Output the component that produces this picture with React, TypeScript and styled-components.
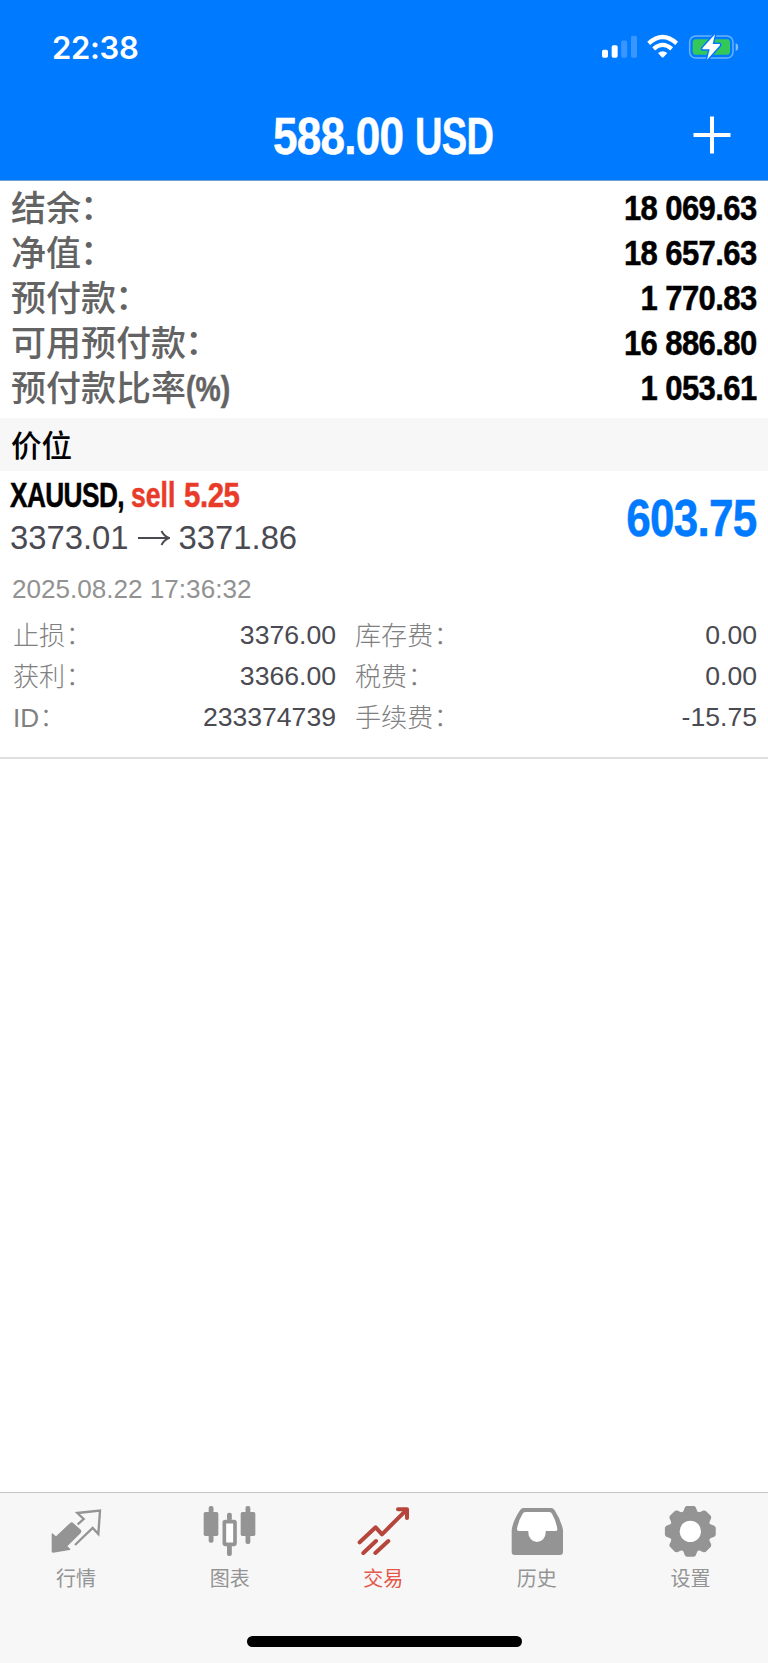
import React from "react";
import styled, { createGlobalStyle } from "styled-components";

const GlobalStyle = createGlobalStyle`
  * { box-sizing: border-box; }
  body {
    margin: 0;
    background: #fff;
    font-family: "Liberation Sans", "Noto Sans CJK SC", sans-serif;
  }
`;

const Screen = styled.div`
  width: 768px;
  height: 1663px;
  display: flex;
  flex-direction: column;
  background: #fff;
  overflow: hidden;
`;

const Header = styled.header`
  height: 181px;
  background: #007aff;
  border-bottom: 1px solid #709fd2;
  color: #fff;
`;

const StatusBar = styled.div`
  height: 90px;
  padding: 4px 28px 0 52px;
  display: flex;
  align-items: center;
  justify-content: space-between;
`;

const Clock = styled.span`
  padding-top: 1px;
  font: 600 31px/40px Inter, sans-serif;
  letter-spacing: -0.3px;
`;

const NavBar = styled.div`
  height: 90px;
  display: grid;
  grid-template-columns: 80px 1fr 80px;
  align-items: center;
  justify-items: center;
`;

const Title = styled.h1`
  margin: 0;
  padding: 4px 2px 0 0;
  display: flex;
  gap: 12px;
  font-size: 51px;
`;

const AddButton = styled.button`
  margin-right: 32px;
  padding: 0;
  border: 0;
  background: none;
  display: flex;
`;

/* Condensed bold run: a box of the final width holding a horizontally squeezed line */
const CondensedBox = styled.span<{ $w: number; $end?: boolean }>`
  width: ${(p) => p.$w}px;
  display: flex;
  justify-content: ${(p) => (p.$end ? "flex-end" : "flex-start")};
  white-space: pre;
  font-weight: 700;
  line-height: 1.2;
`;

const Squeezed = styled.span<{ $scale: number; $end?: boolean; $track: number }>`
  flex: none;
  letter-spacing: ${(p) => p.$track}px;
  -webkit-text-stroke: 0.5px currentColor;
  transform: scaleX(${(p) => p.$scale});
  transform-origin: ${(p) => (p.$end ? "right" : "left")} center;
`;

type CondensedProps = { w: number; scale: number; track?: number; end?: boolean; children: string };
const Condensed = ({ w, scale, track = 0, end, children }: CondensedProps) => (
  <CondensedBox $w={w} $end={end}>
    <Squeezed $scale={scale} $end={end} $track={track}>{children}</Squeezed>
  </CondensedBox>
);

const Summary = styled.section`
  height: 237px;
  padding: 5px 11px 0;
`;

const SummaryRow = styled.div`
  height: 45px;
  display: flex;
  align-items: center;
  justify-content: space-between;
  font-size: 35.5px;
  color: #000;
`;

const SummaryLabel = styled.span`
  padding-top: 1px;
  display: flex;
  align-items: center;
  font: 500 35px/46px "Liberation Sans", "Noto Sans CJK SC", sans-serif;
  color: #636363;
`;

const Colon = styled.span<{ $dx: number; $up: number }>`
  margin-left: ${(p) => p.$dx}px;
  padding-bottom: ${(p) => p.$up * 2}px;
`;

const SectionTitle = styled.h2`
  height: 53px;
  margin: 0;
  padding-left: 11px;
  background: #f7f7f7;
  font: 500 30.6px/52px "Noto Sans CJK SC", sans-serif;
  color: #000;
`;

const Position = styled.section`
  height: 288px;
  padding: 3px 11px 0 10px;
  border-bottom: 2px solid #dfdfdf;
`;

const PositionTop = styled.div`
  display: flex;
  justify-content: space-between;
  align-items: center;
`;

const Symbol = styled.div`
  height: 42px;
  display: flex;
  align-items: center;
  gap: 8px;
  font-size: 35px;
  color: #000;
`;

const Side = styled.span`
  display: flex;
  gap: 9px;
  color: #e93b2a;
`;

const Prices = styled.div`
  height: 43px;
  display: flex;
  align-items: center;
  gap: 9px;
  font-size: 32.8px;
  color: #4a4a52;
`;

const Profit = styled.div`
  padding: 4px 0 0 0;
  font-size: 51px;
  color: #007aff;
`;

const Time = styled.div`
  margin-top: 13px;
  padding-left: 2px;
  font-size: 26.1px;
  line-height: 34px;
  color: #929292;
`;

const Details = styled.div`
  margin-top: 9px;
  padding-left: 3px;
  display: grid;
  grid-template-columns: 323px 402px;
  column-gap: 19px;
  grid-auto-rows: 41px;
`;

const Detail = styled.div`
  display: flex;
  align-items: center;
  justify-content: space-between;
  font-size: 26.6px;
  color: #4a4a52;
`;

const DetailLabel = styled.span`
  padding-top: 1px;
  display: flex;
  align-items: center;
  font: 300 26.1px/42px "Liberation Sans", "Noto Sans CJK SC", sans-serif;
  color: #808080;
`;

const Spacer = styled.div`
  flex: 1;
`;

const TabBar = styled.nav`
  height: 171px;
  background: #f7f7f7;
  border-top: 1px solid #c4c4c4;
  display: flex;
  flex-direction: column;
  align-items: center;
`;

const Tabs = styled.div`
  width: 100%;
  height: 143px;
  display: grid;
  grid-template-columns: repeat(5, 1fr);
`;

const Tab = styled.div<{ $active?: boolean }>`
  padding-top: 7px;
  display: flex;
  flex-direction: column;
  align-items: center;
  color: ${(p) => (p.$active ? "#e5574b" : "#949494")};
  font: 400 20px/30px "Noto Sans CJK SC", sans-serif;
  svg { display: block; margin-bottom: 3px; }
`;

const TabLabel = styled.span`
  padding-right: 1.5px;
`;

const HomeIndicator = styled.div`
  width: 275px;
  height: 11px;
  border-radius: 6px;
  background: #000;
`;

const StatusIcons = () => (
  <svg width="140" height="28" viewBox="648 100 420 84">
    <g fill="#fff">
      <rect x="654" y="150" width="18" height="24" rx="5" />
      <rect x="683" y="137" width="18" height="37" rx="5" />
      <rect x="711.5" y="122.500" width="18" height="51.500" rx="5" opacity=".22" />
      <rect x="741" y="108" width="18" height="66" rx="5" opacity=".22" />
    </g>
    <g fill="none" stroke="#fff" strokeWidth="12.500">
      <path d="M794 131 Q836 93 878 131" />
      <path d="M809 147.500 Q836 124 863 147.500" />
    </g>
    <path d="M822 160 Q836 149 850 160 L838.500 172.500 Q836 175 833.500 172.500Z" fill="#fff" />
    <rect x="917" y="109" width="130" height="66" rx="18" fill="none" stroke="#fff" strokeOpacity=".42" strokeWidth="4.500" />
    <path d="M1055 130 Q1063 133 1063 142 Q1063 151 1055 154Z" fill="#fff" opacity=".5" />
    <rect x="926" y="119" width="112" height="46" rx="9" fill="#34c759" />
    <path d="M993 104 L955 146 Q954 149 958 149 H977 L969 180 L1008 137 Q1009 133 1005 133 H986Z" fill="#fff" stroke="#007aff" strokeWidth="9" strokeLinejoin="round" paintOrder="stroke" />
  </svg>
);

const PlusIcon = () => (
  <svg width="38" height="38" viewBox="0 0 38 38" stroke="#fff" strokeWidth="4">
    <path d="M19 .5V37.500M.5 19H37.500" />
  </svg>
);

const ArrowIcon = () => (
  <svg width="32" height="16" viewBox="0 0 32 16" fill="none" stroke="#4a4a52" strokeWidth="2">
    <path d="M0 8H30M23.500 1Q26 6 31 8Q26 10 23.500 15" />
  </svg>
);

const TabIcon = ({ children }: { children: React.ReactNode }) => (
  <svg width="60" height="60" viewBox="0 0 180 180" fill="currentColor">{children}</svg>
);

const QuotesIcon = () => (
  <TabIcon>
    <path d="M16 102L27 112L70 71Q74 67 78 71L99 90Q103 94 99 98L58 139L68 148L18 156Q16 156 16 154Z" stroke="currentColor" strokeWidth="4" strokeLinejoin="round" />
    <path d="M92 73L110 57L91 39L159 32L154 102L137 84L84 135" fill="none" stroke="currentColor" strokeWidth="7" />
  </TabIcon>
);

const ChartIcon = () => (
  <TabIcon>
    <rect x="11" y="36" width="44" height="72" rx="5" />
    <rect x="26" y="18" width="14.500" height="110" rx="6" />
    <rect x="122" y="36" width="44" height="72" rx="5" />
    <rect x="136.500" y="18" width="14.500" height="114" rx="6" />
    <rect x="81" y="38" width="14.500" height="24" rx="6" />
    <rect x="81" y="132" width="14.500" height="36" rx="6" />
    <rect x="73" y="65" width="32" height="68" rx="3" fill="#fff" stroke="currentColor" strokeWidth="11" />
  </TabIcon>
);

const TradeIcon = () => (
  <TabIcon>
    <g fill="none" stroke="#b6453b" strokeWidth="12" strokeLinecap="round" strokeLinejoin="round">
      <path d="M17 127L65 82L84 103L156 31M28 159L66 123M64 159L103 123" />
      <path d="M132 28H159V54" />
    </g>
  </TabIcon>
);

const HistoryIcon = () => (
  <TabIcon>
    <path d="M47 24H129Q136 24 140 31Q160 62 165 90V156Q165 165 156 165H20Q11 165 11 156V90Q15 62 36 31Q40 24 47 24Z" />
    <path d="M52 36H124Q130 36 132 41Q143 60 148 86Q149 93 143 93H113V98A26 28 0 0 1 61 98V93H33Q26 93 27 86Q32 60 44 41Q46 36 52 36Z" fill="#fff" />
  </TabIcon>
);

const gearPath = (() => {
  const profile: [number, number][] = [[-22.5, 59], [-17, 62], [-11, 72], [-8, 74], [8, 74], [11, 72], [17, 62]];
  const pts: string[] = [];
  for (let k = 0; k < 8; k++) {
    for (const [deg, r] of profile) {
      const a = ((k * 45 + deg - 90) * Math.PI) / 180;
      pts.push(`${(88 + r * Math.cos(a)).toFixed(1)} ${(94 + r * Math.sin(a)).toFixed(1)}`);
    }
  }
  return `M${pts.join("L")}Z`;
})();

const SettingsIcon = () => (
  <TabIcon>
    <path d={gearPath} stroke="currentColor" strokeWidth="6" strokeLinejoin="round" />
    <circle cx="88" cy="94" r="32" fill="#fff" />
  </TabIcon>
);

const balances = [
  { label: "结余", value: "18 069.63" },
  { label: "净值", value: "18 657.63" },
  { label: "预付款", value: "1 770.83" },
  { label: "可用预付款", value: "16 886.80" },
  { label: "预付款比率", suffix: "(%)", value: "1 053.61" },
];

const details = [
  ["止损", "3376.00"],
  ["库存费", "0.00"],
  ["获利", "3366.00"],
  ["税费", "0.00"],
  ["ID", "233374739"],
  ["手续费", "-15.75"],
];

const tabs = [
  { name: "行情", Icon: QuotesIcon },
  { name: "图表", Icon: ChartIcon },
  { name: "交易", Icon: TradeIcon, active: true },
  { name: "历史", Icon: HistoryIcon },
  { name: "设置", Icon: SettingsIcon },
];

export default function App() {
  return (
    <Screen>
      <GlobalStyle />
      <Header>
        <StatusBar>
          <Clock>22:38</Clock>
          <StatusIcons />
        </StatusBar>
        <NavBar>
          <span />
          <Title>
            <Condensed w={130} scale={0.865} track={-0.9}>588.00</Condensed>
            <Condensed w={79} scale={0.745} track={-0.8}>USD</Condensed>
          </Title>
          <AddButton aria-label="add"><PlusIcon /></AddButton>
        </NavBar>
      </Header>

      <Summary>
        {balances.map((b) => (
          <SummaryRow key={b.label}>
            <SummaryLabel>
              {b.label}
              {b.suffix ? (
                <Condensed w={46} scale={0.81}>{b.suffix}</Condensed>
              ) : (
                <Colon $dx={-1} $up={1}>：</Colon>
              )}
            </SummaryLabel>
            <Condensed w={140} scale={0.875} track={-0.7} end>{b.value}</Condensed>
          </SummaryRow>
        ))}
      </Summary>

      <SectionTitle>价位</SectionTitle>

      <Position>
        <PositionTop>
          <div>
            <Symbol>
              <Condensed w={113} scale={0.75} track={-0.8}>XAUUSD,</Condensed>
              <Side>
                <Condensed w={44} scale={0.76}>sell</Condensed>
                <Condensed w={56} scale={0.84} track={-0.5}>5.25</Condensed>
              </Side>
            </Symbol>
            <Prices>
              <span>3373.01</span>
              <ArrowIcon />
              <span>3371.86</span>
            </Prices>
          </div>
          <Profit>
            <Condensed w={140} scale={0.865} track={-0.9} end>603.75</Condensed>
          </Profit>
        </PositionTop>
        <Time>2025.08.22 17:36:32</Time>
        <Details>
          {details.map(([label, value]) => (
            <Detail key={label}>
              <DetailLabel>
                {label}
                <Colon $dx={0.5} $up={1.5}>：</Colon>
              </DetailLabel>
              <span>{value}</span>
            </Detail>
          ))}
        </Details>
      </Position>

      <Spacer />

      <TabBar>
        <Tabs>
          {tabs.map(({ name, Icon, active }) => (
            <Tab key={name} $active={active}>
              <Icon />
              <TabLabel>{name}</TabLabel>
            </Tab>
          ))}
        </Tabs>
        <HomeIndicator />
      </TabBar>
    </Screen>
  );
}
